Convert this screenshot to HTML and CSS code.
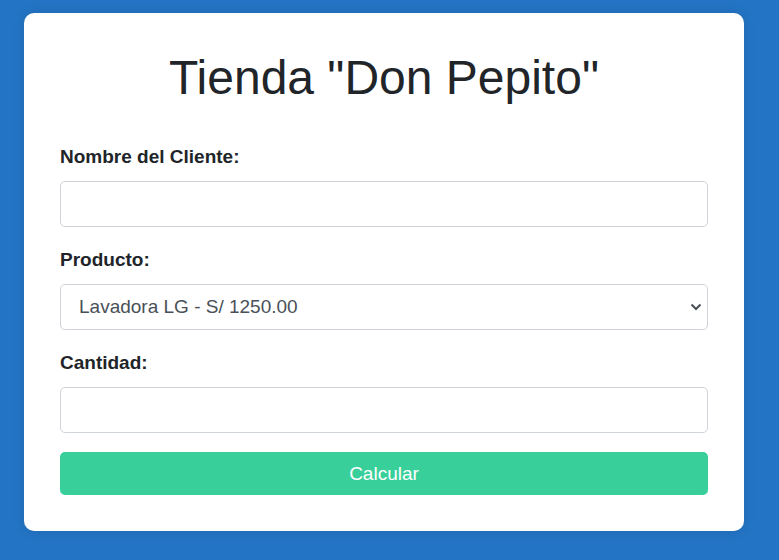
FILE: index.html
```html
<!DOCTYPE html>
<html lang="es">
<head>
  <meta charset="utf-8">
  <meta name="viewport" content="width=device-width, initial-scale=1">
  <title>Tienda "Don Pepito"</title>
  <link rel="stylesheet" href="styles.css">
</head>
<body>
  <main class="card">
    <h1 class="title">Tienda "Don Pepito"</h1>
    <form class="form">
      <div class="field">
        <label class="label" for="cliente">Nombre del Cliente:</label>
        <input class="control" type="text" id="cliente">
      </div>
      <div class="field">
        <label class="label" for="producto">Producto:</label>
        <div class="select">
          <select class="control control-select" id="producto">
            <option>Lavadora LG - S/ 1250.00</option>
          </select>
          <svg class="chevron" viewBox="0 0 12 8" aria-hidden="true"><path d="M1.500 1.500 6 6l4.500-4.500"/></svg>
        </div>
      </div>
      <div class="field">
        <label class="label" for="cantidad">Cantidad:</label>
        <input class="control" type="number" id="cantidad">
      </div>
      <button class="button" type="button">Calcular</button>
    </form>
  </main>
</body>
</html>
```

FILE: styles.css
```css
* {
  box-sizing: border-box;
}

body {
  margin: 0;
  padding: 13px 35px 29px 24px;
  background: #2374c4;
  color: #212529;
  font-family: "Liberation Sans", Arial, sans-serif;
  font-size: 19px;
  line-height: 28px;
}

.card {
  padding: 36px;
  background: #fff;
  border-radius: 10px;
  box-shadow: 0 0 12px rgba(0, 0, 0, 0.1);
}

.title {
  margin: 0 0 36px;
  font-size: 48px;
  font-weight: 400;
  line-height: 58px;
  text-align: center;
}

.form {
  display: grid;
  gap: 19px;
}

.field {
  display: grid;
  gap: 10px;
}

.label {
  font-weight: 700;
}

.control {
  display: block;
  width: 100%;
  height: 46px;
  padding: 0 18px;
  border: 1px solid #ced4da;
  border-radius: 5px;
  background: #fff;
  color: #495057;
  font: inherit;
}

.control-select {
  appearance: none;
}

.select {
  position: relative;
}

.chevron {
  position: absolute;
  top: 19px;
  right: 6px;
  width: 12px;
  height: 8px;
  fill: none;
  stroke: #495057;
  stroke-width: 2;
  pointer-events: none;
}

.button {
  height: 43px;
  padding: 0 18px;
  border: 0;
  border-radius: 5px;
  background: #38cf9b;
  color: #fff;
  font: inherit;
}
```
